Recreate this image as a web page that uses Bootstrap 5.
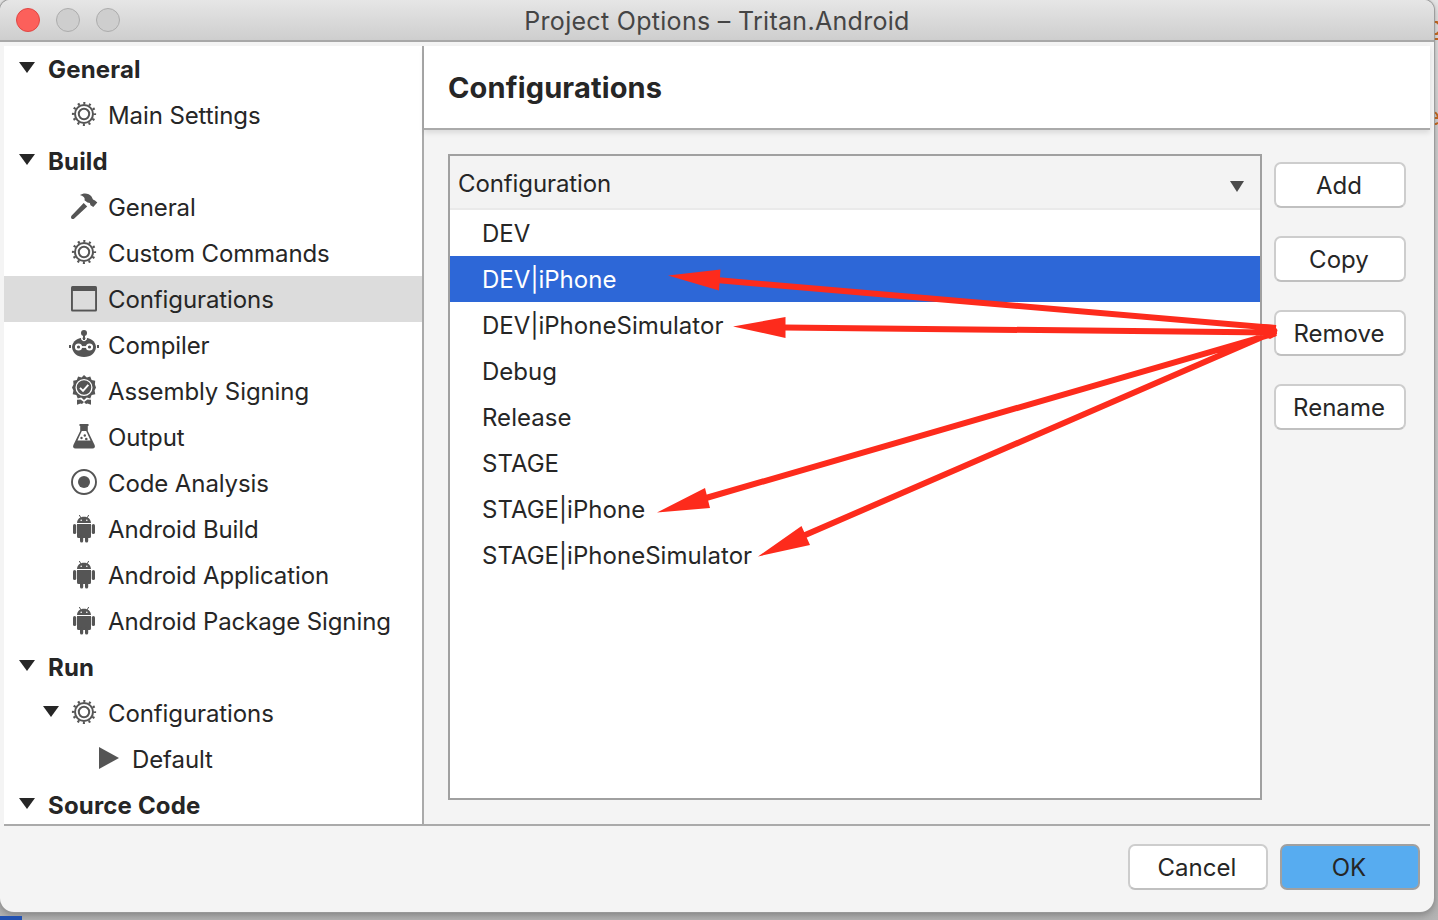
<!DOCTYPE html>
<html lang="en">
<head>
<meta charset="utf-8">
<title>Project Options – Tritan.Android</title>
<link href="https://cdn.jsdelivr.net/npm/bootstrap@5.3.0/dist/css/bootstrap.min.css" rel="stylesheet">
<style>
body{width:1438px;height:920px;overflow:hidden;background:linear-gradient(#e6e6e6,#d2d2d2 15%,#c9c9c9 60%,#b4b4b4);font-family:Inter,"Liberation Sans",sans-serif;font-size:24px;line-height:46px;color:#262626;letter-spacing:.03px}
.win{width:1434px;height:912px;background:#f4f4f4;border-radius:10px 10px 14px 14px;box-shadow:0 0 1px 1px #999,0 3px 8px rgba(0,0,0,.3);overflow:hidden}
.bar{height:42px;background:linear-gradient(#e6e6e6,#cecece);border-bottom:2px solid #a8a8a8;color:#454545;line-height:42px;font-size:25px;letter-spacing:.3px}
.lights{left:16px;top:8px;gap:16px}
.light{width:24px;height:24px;border-radius:50%;background:#cecece;border:1px solid #acacac}
.light.close-dot{background:#fc605b;border-color:#df4744}
.main{height:784px;padding:4px 4px 0}
.side{width:420px;background:#fff;border-right:2px solid #aaa;border-bottom:2px solid #aaa;overflow:hidden;letter-spacing:-.1px}
.item{height:46px;flex:none;white-space:nowrap;padding-left:65px}
.item span{padding-top:2px}
.item.sel{background:#dcdcdc}
.item svg{width:30px;height:30px;margin:-3px 9px 0 0;flex:none;color:#555;overflow:visible}
.item.grp{font-weight:700;padding-left:15px;letter-spacing:.18px}
.item svg.tri{width:16px;height:11px;margin:-4px 13px 0 0;color:#262626}
.item.sub{padding-left:39px}.item.sub svg.tri{margin-right:10px}
.item.leaf{padding-left:95px}.item.leaf svg{width:20px;height:22px;margin-right:13px;margin-top:-2px}
.pane{border-bottom:2px solid #aaa}
.head{height:84px;background:#fff;border-bottom:2px solid #aaa;box-shadow:0 3px 5px rgba(0,0,0,.1);font-size:29px;font-weight:700;line-height:84px;padding-left:24px;letter-spacing:.15px}
.cfg{width:814px;height:646px;border:2px solid #a0a0a0;background:#fff}
.cfghead{height:54px;background:#f3f3f3;border-bottom:2px solid #eaeaea;line-height:56px;padding:0 16px 0 8px;letter-spacing:-.1px}
.cfghead span{padding-top:4px}
.cfg .row-i{height:46px;padding:1px 0 0 32px}
.cfg .on{background:#2d67d7;color:#fff}
.b{height:46px;padding:0 2px 0 0;border:2px solid #cdcdcd;border-bottom-color:#c0c0c0;border-radius:7px;background:#fff;color:#262626;font-size:24px;line-height:44px;width:132px;letter-spacing:inherit}
.b.wide{width:140px}.b.okay{background:#57acf0;border-color:#a0a0a0}
.foot{height:86px;padding:18px 14px 0}
.edge{left:1434px;width:4px}
</style>
</head>
<body class="position-relative">
<svg class="d-none">
<symbol id="gear" viewBox="0 0 30 30"><g fill="none" stroke="currentColor"><circle cx="15" cy="15" r="9" stroke-width="2"/><circle cx="15" cy="15" r="5.2" stroke-width="2"/><circle cx="15" cy="15" r="10.900" stroke-width="2.400" stroke-dasharray="2.100 3.607" stroke-dashoffset="1.050"/></g></symbol>
<symbol id="hammer" viewBox="0 0 30 30"><path fill="currentColor" d="M11 4C14.500 1.500 20 2 22.500 5.500L24 8.500L26 9.500L28.300 11.500L24.300 16L21.500 14.300L20.800 12L18.500 11.500L15.500 9.300C16.500 6.500 14 5 11 4ZM14.700 12L18.200 15.500L5 27.700C3.500 29 1 27 2.500 24.700Z"/></symbol>
<symbol id="frame" viewBox="0 0 30 30"><rect x="2" y="3" width="26" height="25.500" rx="1.500" fill="currentColor"/><path fill="#dcdcdc" d="M3.900 8H26.100V26.600H3.900Z"/></symbol>
<symbol id="bot" viewBox="0 0 30 30"><g fill="currentColor"><circle cx="15" cy="4" r="3"/><path d="M0 16h2v3H0zM28 16h2v3h-2z"/><path d="M15 8.500C21 8.500 26.500 12 27 18C26.500 24 22 28 15 28S3.500 24 3 18C3.500 12 9 8.500 15 8.500Z"/></g><path stroke="#fff" stroke-width="1.800" d="M12 18h6"/><g fill="none" stroke="#fff" stroke-width="2"><circle cx="9.500" cy="18" r="2.600"/><circle cx="20.500" cy="18" r="2.600"/></g><path stroke="#fff" stroke-width="1.500" d="M12.800 8v2q2.200 3 4.400 0V8" fill="none"/><path fill="currentColor" d="M14 5h2v6h-2z"/></symbol>
<symbol id="award" viewBox="0 0 30 30"><path fill="currentColor" d="M15 0l2.800 2.400L21.300 1.500l1.300 3.400 3.600.8-.3 3.700L27 12.500l-1.400 3 .7 3.700-3.700.9-1.300 3.300-3.500-.8L15 25l-2.800-2.400-3.500.8-1.300-3.300-3.700-.9.700-3.700-1.400-3 1.500-3.100-.3-3.700 3.600-.8 1.300-3.400 3.500.9Z"/><circle cx="15" cy="12.500" r="7.900" fill="none" stroke="#fff" stroke-width="1.300"/><path d="M11 12.800l3 3 5.300-6" fill="none" stroke="#fff" stroke-width="1.900"/><path fill="currentColor" d="M8 24.800l3.500-.3 3.500 2.500 3.500-2.500 3.500.3v5l-3.500-1.300-1.500.5-2-2-2 2-1.500-.5L8 29.800Z"/></symbol>
<symbol id="flask" viewBox="0 0 30 30"><path fill="currentColor" d="M10.500 3H19.500V5H18.800V10L25.600 24C26.500 26 25.500 27.500 23.500 27.500H6.500C4.500 27.500 3.500 26 4.400 24L11.200 10V5H10.500Z"/><path fill="#fff" d="M12.800 10h4.400L21.500 19.500h-13Z"/><g fill="currentColor"><circle cx="15.800" cy="14.500" r="1.200"/><circle cx="12.500" cy="17" r="1.200"/><circle cx="17.300" cy="18" r="1.300"/></g></symbol>
<symbol id="target" viewBox="0 0 30 30"><circle cx="15" cy="15" r="12" fill="none" stroke="currentColor" stroke-width="1.900"/><circle cx="15" cy="15" r="6" fill="currentColor"/></symbol>
<symbol id="droid" viewBox="0 0 30 30"><g fill="currentColor"><path d="M8 10C8.300 6 11 3.800 15 3.800S21.700 6 22 10ZM8 11h14v12.500q0 1.500-1.500 1.500h-11q-1.500 0-1.500-1.500z"/><rect x="4" y="11" width="3.200" height="10" rx="1.600"/><rect x="22.800" y="11" width="3.200" height="10" rx="1.600"/><rect x="11" y="22" width="3.200" height="7.500" rx="1.600"/><rect x="16" y="22" width="3.200" height="7.500" rx="1.600"/></g><path stroke="currentColor" stroke-width="1" d="M12 5l-1.700-3M18 5l1.700-3"/><circle cx="12.200" cy="7.200" r=".8" fill="#fff"/><circle cx="17.800" cy="7.200" r=".8" fill="#fff"/></symbol>
<symbol id="down" viewBox="0 0 16 11"><path fill="currentColor" d="M0 0H16L8 11Z"/></symbol>
</svg>
<svg class="edge position-absolute top-0" height="130" fill="none" stroke="#c8691f" stroke-width="2"><path d="M0 22H3L4 24M0 34H3L4 32M0 39H4M0 113Q3 112 4 118H0M0 124H2L4 123"/></svg>
<div class="win d-flex flex-column position-relative">
  <header class="bar position-relative text-center flex-shrink-0">
    <div class="lights d-flex position-absolute"><i class="light close-dot"></i><i class="light"></i><i class="light"></i></div>
    <span class="title">Project Options – Tritan.Android</span>
  </header>
  <div class="main d-flex flex-shrink-0">
    <nav class="side d-flex flex-column flex-shrink-0">
      <div class="item grp d-flex align-items-center"><svg class="tri"><use href="#down"/></svg><span>General</span></div>
      <div class="item d-flex align-items-center"><svg><use href="#gear"/></svg><span>Main Settings</span></div>
      <div class="item grp d-flex align-items-center"><svg class="tri"><use href="#down"/></svg><span>Build</span></div>
      <div class="item d-flex align-items-center"><svg><use href="#hammer"/></svg><span>General</span></div>
      <div class="item d-flex align-items-center"><svg><use href="#gear"/></svg><span>Custom Commands</span></div>
      <div class="item sel d-flex align-items-center"><svg><use href="#frame"/></svg><span>Configurations</span></div>
      <div class="item d-flex align-items-center"><svg><use href="#bot"/></svg><span>Compiler</span></div>
      <div class="item d-flex align-items-center"><svg><use href="#award"/></svg><span>Assembly Signing</span></div>
      <div class="item d-flex align-items-center"><svg><use href="#flask"/></svg><span>Output</span></div>
      <div class="item d-flex align-items-center"><svg><use href="#target"/></svg><span>Code Analysis</span></div>
      <div class="item d-flex align-items-center"><svg><use href="#droid"/></svg><span>Android Build</span></div>
      <div class="item d-flex align-items-center"><svg><use href="#droid"/></svg><span>Android Application</span></div>
      <div class="item d-flex align-items-center"><svg><use href="#droid"/></svg><span>Android Package Signing</span></div>
      <div class="item grp d-flex align-items-center"><svg class="tri"><use href="#down"/></svg><span>Run</span></div>
      <div class="item sub d-flex align-items-center"><svg class="tri"><use href="#down"/></svg><svg><use href="#gear"/></svg><span>Configurations</span></div>
      <div class="item leaf d-flex align-items-center"><svg viewBox="0 0 20 22"><path fill="currentColor" d="M0 0L20 11L0 22Z"/></svg><span>Default</span></div>
      <div class="item grp d-flex align-items-center"><svg class="tri"><use href="#down"/></svg><span>Source Code</span></div>
    </nav>
    <section class="pane flex-grow-1">
      <h1 class="head m-0"><span>Configurations</span></h1>
      <div class="d-flex pt-4 ps-4">
        <div class="cfg">
          <div class="cfghead d-flex justify-content-between align-items-center"><span>Configuration</span><svg width="14" height="11" viewBox="0 0 16 11" preserveAspectRatio="none" class="mt-2"><path fill="#4b4b4b" d="M0 0H16L8 11Z"/></svg></div>
          <div class="row-i"><span>DEV</span></div>
          <div class="row-i on"><span>DEV|iPhone</span></div>
          <div class="row-i"><span>DEV|iPhoneSimulator</span></div>
          <div class="row-i"><span>Debug</span></div>
          <div class="row-i"><span>Release</span></div>
          <div class="row-i"><span>STAGE</span></div>
          <div class="row-i"><span>STAGE|iPhone</span></div>
          <div class="row-i"><span>STAGE|iPhoneSimulator</span></div>
        </div>
        <div class="d-flex flex-column" style="gap:28px;padding:8px 0 0 12px">
          <button class="btn b"><span>Add</span></button>
          <button class="btn b"><span>Copy</span></button>
          <button class="btn b"><span>Remove</span></button>
          <button class="btn b"><span>Rename</span></button>
        </div>
      </div>
    </section>
  </div>
  <footer class="foot d-flex justify-content-end">
    <button class="btn b wide me-2"><span>Cancel</span></button>
    <button class="btn b wide okay ms-1"><span>OK</span></button>
  </footer>
  <svg class="position-absolute top-0 start-0 pe-none" width="1434" height="912"><g stroke="#fd2b1c" stroke-width="6"><path d="M719 280.300L1276 328M784 327.500L1276 332.500M706 498L1276 333M804 535.500L1276 331"/></g><path fill="#fd2b1c" d="M668 275.500L720.500 269.500 719 290.500ZM733 326.500L785.500 317V338ZM657 512.500L705 488 710 508ZM758 556.500L801.500 526 810 545ZM1274 325L1277.500 330 1276 336 1270 339 1260 334V324Z"/></svg>
</div>
<div class="position-absolute" style="left:0;top:916px;width:22px;height:4px;background:#2251b0"></div>
<script src="https://cdn.jsdelivr.net/npm/bootstrap@5.3.0/dist/js/bootstrap.bundle.min.js"></script>
</body>
</html>
